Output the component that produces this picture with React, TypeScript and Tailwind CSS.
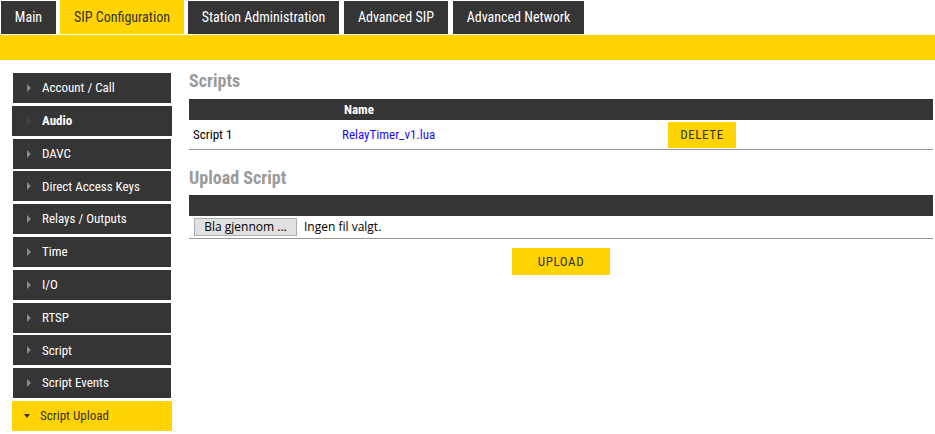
const tabs = [
  { label: 'Main', w: 'w-[55px]', active: false },
  { label: 'SIP Configuration', w: 'w-[124px]', active: true },
  { label: 'Station Administration', w: 'w-[151px]', active: false },
  { label: 'Advanced SIP', w: 'w-[104px]', active: false },
  { label: 'Advanced Network', w: 'w-[131px]', active: false },
];

const menu = [
  'Account / Call',
  'Audio',
  'DAVC',
  'Direct Access Keys',
  'Relays / Outputs',
  'Time',
  'I/O',
  'RTSP',
  'Script',
  'Script Events',
  'Script Upload',
];

function RightArrow({ faint }: { faint?: boolean }) {
  return (
    <span
      className={
        faint
          ? 'inline-block w-0 h-0 border-y-[4px] border-y-transparent border-l-[4px] border-l-[#444]'
          : 'inline-block w-0 h-0 border-y-[4px] border-y-transparent border-l-[4px] border-l-[#8a8a8a]'
      }
    />
  );
}

export default function App() {
  return (
    <div className="w-[935px] h-[434px] overflow-hidden bg-white font-['Roboto_Condensed',sans-serif] text-[13px]">
      {/* top tabs */}
      <div className="flex items-end h-[34px] pl-px">
        {tabs.map((t, i) => (
          <div
            key={t.label}
            className={[
              t.w,
              i === 0 ? '' : i >= 3 ? 'ml-[5px]' : 'ml-[4px]',
              t.active
                ? 'h-[34px] bg-[#ffd400] text-[#333]'
                : 'h-[33px] bg-[#353535] text-white',
              'flex items-center justify-center text-[14px] font-normal whitespace-nowrap',
            ].join(' ')}
          >
            {t.label}
          </div>
        ))}
      </div>
      <div className="mt-px h-[25px] bg-[#ffd400]" />

      <div className="flex">
        {/* sidebar */}
        <div className="ml-[12px] mt-[13px] w-[160px] flex flex-col gap-[2.8px]">
          {menu.map((m) => {
            const active = m === 'Script Upload';
            const audio = m === 'Audio';
            if (active) {
              return (
                <div key={m} className="h-[30px] bg-[#ffd400] flex items-center pl-[12px] text-[#333] font-normal">
                  <span className="inline-block w-0 h-0 border-x-[3.5px] border-x-transparent border-t-[4px] border-t-[#333]" />
                  <span className="ml-[10px]">{m}</span>
                </div>
              );
            }
            return (
              <div
                key={m}
                className={
                  audio
                    ? 'h-[30px] bg-[#353535] flex items-center pl-[15px] text-white font-bold'
                    : 'h-[30px] mx-px bg-[#353535] flex items-center pl-[14px] text-white font-normal'
                }
              >
                <RightArrow faint={audio} />
                <span className="ml-[11px]">{m}</span>
              </div>
            );
          })}
          <div className="h-[30px] mx-px bg-[#353535]" />
        </div>

        {/* content */}
        <div className="ml-[17px] mr-[2px] flex-1 pt-[11px]">
          <div className="h-[28px] text-[18px] leading-[20px] font-bold text-[#9b9b9b]">Scripts</div>
          <div className="grid grid-cols-[151px_328px_1fr]">
            <div className="h-[21px] bg-[#353535]" />
            <div className="h-[21px] bg-[#353535] flex items-center pl-[4px] text-white font-bold">Name</div>
            <div className="h-[21px] bg-[#353535]" />
            <div className="h-[30px] border-b border-[#999] flex items-center pl-[4px] text-black">Script 1</div>
            <div className="h-[30px] border-b border-[#999] flex items-center pl-[2px] text-[#1a0dff]">RelayTimer_v1.lua</div>
            <div className="h-[30px] border-b border-[#999] flex items-center">
              <button className="w-[68px] h-[26px] bg-[#ffd400] text-[#333] tracking-[0.6px]">DELETE</button>
            </div>
          </div>

          <div className="mt-[18px] h-[27px] text-[18px] leading-[20px] font-bold text-[#9b9b9b]">Upload Script</div>
          <div className="h-[21px] bg-[#353535]" />
          <div className="h-[23px] border-b border-[#999] flex items-center pl-[5px] font-['Open_Sans',sans-serif] text-[12px] text-black">
            <span className="w-[103px] h-[18px] bg-[#e1e1e1] border border-[#adadad] flex items-center justify-center leading-none">
              Bla gjennom ...
            </span>
            <span className="ml-[7px]">Ingen fil valgt.</span>
          </div>
          <div className="flex justify-center mt-[9px]">
            <button className="w-[98px] h-[27px] bg-[#ffd400] text-[#333] tracking-[0.6px]">UPLOAD</button>
          </div>
        </div>
      </div>
    </div>
  );
}
